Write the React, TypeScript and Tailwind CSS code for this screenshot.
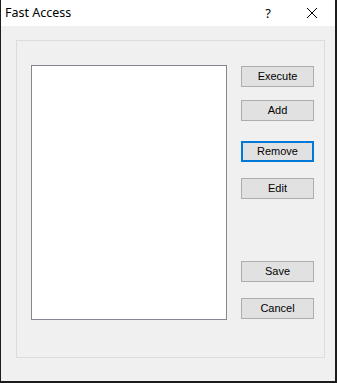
export default function App() {
  const buttons = [
    { label: 'Execute', mt: 'mt-px', focused: false },
    { label: 'Add', mt: 'mt-[13px]', focused: false },
    { label: 'Remove', mt: 'mt-[20px]', focused: true },
    { label: 'Edit', mt: 'mt-[16px]', focused: false },
    { label: 'Save', mt: 'mt-[62px]', focused: false },
    { label: 'Cancel', mt: 'mt-[16px]', focused: false },
  ]

  return (
    <div className="w-[337px] h-[383px] flex flex-col bg-[#f0f0f0] border-l border-r-2 border-b-2 border-[#1c1c1c] font-['Liberation_Sans',Arial,sans-serif] text-black">
      {/* Title bar */}
      <div className="h-[26px] bg-white flex items-center shrink-0">
        <span className="pl-[4px] text-[12.5px] font-['Noto_Sans',sans-serif] leading-none">Fast Access</span>
        <span className="ml-auto mr-[35px] text-[13px] font-['Noto_Sans',sans-serif] leading-none">?</span>
        <svg width="12" height="12" viewBox="0 0 12 12" className="mr-[17px]">
          <path d="M1 1 L11 11 M11 1 L1 11" stroke="#000" strokeWidth="1" />
        </svg>
      </div>

      {/* Body */}
      <div className="pl-[15px] pt-[14px]">
        <div className="w-[309px] h-[318px] border border-[#dcdcdc] flex pl-[14px] pt-[24px]">
          <div className="w-[196px] h-[255px] bg-white border border-[#828790] shrink-0"></div>
          <div className="ml-[14px] flex flex-col">
            {buttons.map((b) => (
              <button
                key={b.label}
                className={`${b.mt} w-[73px] h-[21px] bg-[#e1e1e1] text-[11px] leading-none flex items-center justify-center ${
                  b.focused ? 'border-2 border-[#0078d7]' : 'border border-[#adadad]'
                }`}
              >
                {b.label}
              </button>
            ))}
          </div>
        </div>
      </div>
    </div>
  )
}
